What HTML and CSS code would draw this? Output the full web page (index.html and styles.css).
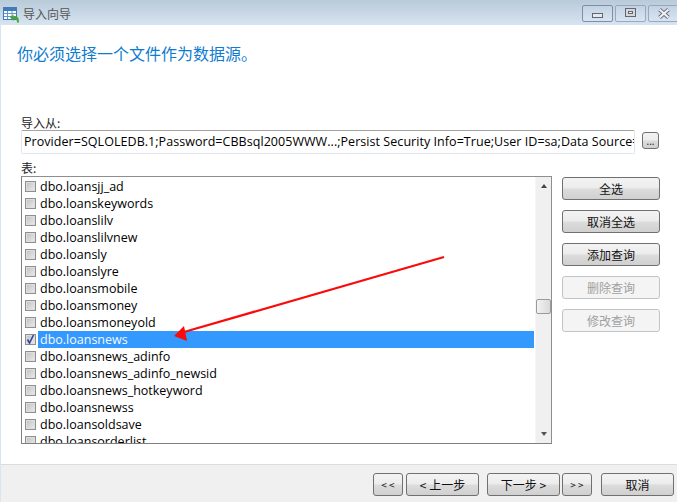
FILE: index.html
```html
<!DOCTYPE html>
<html lang="zh">
<head>
<meta charset="utf-8">
<title>导入向导</title>
<link rel="stylesheet" href="styles.css">
</head>
<body>
<div class="window">
  <header class="titlebar">
    <svg class="appicon" width="17" height="16" viewBox="0 0 17 16">
      <rect x="0.500" y="0.500" width="13" height="12" fill="#fff" stroke="#3f7cb8"/>
      <rect x="0" y="0" width="14" height="4" fill="#3f7cb8"/>
      <path d="M1 6.500H13M1 9.500H13M4.500 4V12M9 4V12" stroke="#5f97cc" fill="none"/>
      <path d="M7 10.500L10.500 7.500V9.500H12.500C15 9.500 16 11 16 15.500H14C14 13 13.500 12 12 12H10.500V14Z" fill="#47a834"/>
    </svg>
    <span class="title">导入向导</span>
    <div class="controls">
      <div class="ctl"><span class="ico-min"></span></div>
      <div class="ctl"><span class="ico-max"><span class="ico-max-inner"></span></span></div>
      <div class="ctl ctl-close">
        <svg width="12" height="11" viewBox="0 0 12 11"><path d="M1.500 1.500L10.500 9.500M10.500 1.500L1.500 9.500" stroke="#666c7a" stroke-width="4" fill="none"/><path d="M1.500 1.500L10.500 9.500M10.500 1.500L1.500 9.500" stroke="#f0f1f4" stroke-width="2.200" fill="none"/></svg>
      </div>
    </div>
  </header>
  <main class="content">
    <h1 class="heading">你必须选择一个文件作为数据源。</h1>
    <label class="field-label">导入从:</label>
    <div class="source-row">
      <div class="source">Provider=SQLOLEDB.1;Password=CBBsql2005WWW...;Persist Security Info=True;User ID=sa;Data Source=</div>
      <button class="btn btn-dots">...</button>
    </div>
    <label class="field-label field-label-table">表:</label>
    <div class="table-row">
      <div class="list">
        <div class="rows">
          <div class="row"><span class="check"></span><span class="name">dbo.loansjj_ad</span></div>
          <div class="row"><span class="check"></span><span class="name">dbo.loanskeywords</span></div>
          <div class="row"><span class="check"></span><span class="name">dbo.loanslilv</span></div>
          <div class="row"><span class="check"></span><span class="name">dbo.loanslilvnew</span></div>
          <div class="row"><span class="check"></span><span class="name">dbo.loansly</span></div>
          <div class="row"><span class="check"></span><span class="name">dbo.loanslyre</span></div>
          <div class="row"><span class="check"></span><span class="name">dbo.loansmobile</span></div>
          <div class="row"><span class="check"></span><span class="name">dbo.loansmoney</span></div>
          <div class="row"><span class="check"></span><span class="name">dbo.loansmoneyold</span></div>
          <div class="row"><span class="check"><svg width="11" height="11" viewBox="0 0 11 11"><path d="M2.500 5.500L4.500 9L8.500 1" stroke="#34489c" stroke-width="1.600" fill="none"/></svg></span><span class="name selected">dbo.loansnews</span></div>
          <div class="row"><span class="check"></span><span class="name">dbo.loansnews_adinfo</span></div>
          <div class="row"><span class="check"></span><span class="name">dbo.loansnews_adinfo_newsid</span></div>
          <div class="row"><span class="check"></span><span class="name">dbo.loansnews_hotkeyword</span></div>
          <div class="row"><span class="check"></span><span class="name">dbo.loansnewss</span></div>
          <div class="row"><span class="check"></span><span class="name">dbo.loansoldsave</span></div>
          <div class="row"><span class="check"></span><span class="name">dbo.loansorderlist</span></div>
        </div>
        <div class="scrollbar">
          <span class="arrow-up"></span>
          <span class="thumb"></span>
          <span class="arrow-down"></span>
        </div>
      </div>
      <div class="side">
        <button class="btn">全选</button>
        <button class="btn">取消全选</button>
        <button class="btn">添加查询</button>
        <button class="btn" disabled>删除查询</button>
        <button class="btn" disabled>修改查询</button>
      </div>
    </div>
  </main>
  <footer class="footer">
    <button class="btn btn-skip">&lt; &lt;</button>
    <button class="btn btn-step btn-prev">&lt; 上一步</button>
    <button class="btn btn-step btn-next">下一步 &gt;</button>
    <button class="btn btn-skip">&gt; &gt;</button>
    <button class="btn btn-step btn-cancel">取消</button>
  </footer>
  <svg class="annotation" width="677" height="502" viewBox="0 0 677 502">
    <path d="M444 257L184 332" stroke="#fb0a0a" stroke-width="2.200" fill="none"/>
    <path d="M174 336L184 326L187 341Z" fill="#fb0a0a"/>
  </svg>
</div>
</body>
</html>
```

FILE: styles.css
```css
* { box-sizing: border-box; }
html, body { margin: 0; padding: 0; }
body {
  width: 677px;
  height: 502px;
  overflow: hidden;
  background: #d8e5f2;
  font-family: "Open Sans", "Noto Sans CJK SC", sans-serif;
  font-size: 12.5px;
  color: #000;
}
.window {
  position: relative;
  width: 677px;
  height: 502px;
  display: flex;
  flex-direction: column;
}
.titlebar {
  height: 25px;
  flex: none;
  display: flex;
  align-items: center;
  padding-left: 3px;
  background: linear-gradient(#b9cad9, #d7e4f1);
}
.appicon { flex: none; margin: 4px 3px 0 0; }
.title {
  font-family: "Noto Sans CJK SC", sans-serif;
  color: #555;
  font-size: 12px;
  margin-top: 2px;
}
.controls {
  margin-left: auto;
  display: flex;
  gap: 2px;
  align-self: flex-start;
  margin-top: 5px;
  margin-right: -2px;
}
.ctl {
  width: 31px;
  height: 17px;
  border: 1px solid #7f8ea6;
  border-radius: 2px;
  background: linear-gradient(#c3d2e2, #d8e4f0);
  display: flex;
  align-items: center;
  justify-content: center;
}
.ctl + .ctl { border-color: #98a8bd; }
.ico-min {
  width: 11px;
  height: 5px;
  margin-top: 3px;
  border: 1px solid #5f6675;
  background: #e6e8ec;
}
.ico-max {
  width: 11px;
  height: 9px;
  margin-top: -2px;
  border: 1px solid #5f6675;
  background: #d4d6da;
  display: flex;
  align-items: center;
  justify-content: center;
}
.ico-max-inner {
  width: 5px;
  height: 3px;
  border: 1px solid #5f6675;
  background: #eceef2;
}
.ctl-close svg { margin-top: -1px; }
.content {
  flex: 1;
  margin-left: 1px;
  padding: 16px 0 0 20px;
  background: #fff;
}
.heading {
  margin: 0 0 50px -4px;
  height: 24px;
  font: normal 16px/24px "Noto Sans CJK SC", sans-serif;
  color: #0f7ccf;
}
.field-label {
  display: block;
  height: 15px;
  line-height: 15px;
  font-family: "Noto Sans CJK SC", sans-serif;
  font-size: 12px;
  color: #222;
}
.source-row { display: flex; gap: 7px; align-items: flex-start; }
.source {
  width: 614px;
  height: 24px;
  padding: 0 2px;
  line-height: 22px;
  letter-spacing: 0.05px;
  white-space: nowrap;
  overflow: hidden;
  border: 1px solid #dfe6f0;
  border-top-color: #a3a3a3;
  border-radius: 2px;
}
.field-label-table { margin-top: 6px; height: 16px; }
.btn {
  font-family: "Noto Sans CJK SC", sans-serif;
  font-size: 12px;
  line-height: 1;
  color: #111;
  padding: 0;
  height: 23px;
  border: 1px solid #707070;
  border-radius: 3px;
  background: linear-gradient(#f3f3f3 0%, #ececec 48%, #dcdcdc 52%, #d0d0d0 100%);
}
.btn[disabled] {
  color: #a0a0a0;
  border-color: #c0c4c6;
  background: #f4f4f4;
}
.btn-dots {
  width: 17px;
  height: 17px;
  margin-top: 2px;
  font-family: "Open Sans", sans-serif;
  font-size: 10px;
}
.table-row { display: flex; gap: 10px; align-items: flex-start; }
.list {
  width: 531px;
  height: 268px;
  flex: none;
  display: flex;
  overflow: hidden;
  border: 1px solid #808080;
  border-color: #8e8e8e #8e8e8e #808080 #808080;
}
.rows {
  flex: 1;
  min-width: 0;
  padding: 1px 1px 0 3px;
  overflow: hidden;
}
.row {
  height: 17px;
  display: flex;
  align-items: center;
  gap: 2px;
}
.check {
  width: 11px;
  height: 11px;
  flex: none;
  display: block;
  border: 1px solid #8e8f8f;
  background: linear-gradient(135deg, #bfbfbf, #ededed);
  box-shadow: inset 0 0 0 1px #dedede;
  position: relative;
}
.check svg { position: absolute; left: -1px; top: -1px; }
.name {
  flex: 1;
  height: 17px;
  line-height: 18px;
  padding-left: 2px;
  white-space: nowrap;
}
.selected { background: #3399ff; color: #f3f8ff; }
.scrollbar {
  width: 16px;
  flex: none;
  background: #f0f0f0;
  border-left: 1px solid #f6f6f6;
  display: flex;
  flex-direction: column;
  align-items: center;
}
.arrow-up {
  width: 0; height: 0;
  margin-top: 7px;
  border: 3px solid transparent;
  border-top: 0;
  border-bottom: 4px solid #444;
}
.thumb {
  width: 15px;
  height: 15px;
  margin-top: 111px;
  margin-left: -1px;
  border: 1px solid #9a9a9a;
  border-radius: 2px;
  background: linear-gradient(90deg, #f2f2f2, #dadada);
}
.arrow-down {
  width: 0; height: 0;
  margin-top: auto;
  margin-bottom: 7px;
  border: 3px solid transparent;
  border-bottom: 0;
  border-top: 4px solid #555;
}
.side {
  width: 98px;
  margin-top: 1px;
  display: flex;
  flex-direction: column;
  gap: 10px;
}
.footer {
  height: 38px;
  flex: none;
  display: flex;
  align-items: flex-start;
  margin-left: 1px;
  padding: 8px 0 0 372px;
  background: #f0f0f0;
  border-top: 1px solid #dcdcdc;
}
.btn-skip { width: 30px; font-size: 10px; }
.btn-step { width: 73px; }
.btn-prev { margin-left: 3px; }
.btn-next { margin-left: 8px; margin-right: 2px; }
.btn-cancel { margin-left: 9px; }
.annotation { position: absolute; left: 0; top: 0; pointer-events: none; }
```
